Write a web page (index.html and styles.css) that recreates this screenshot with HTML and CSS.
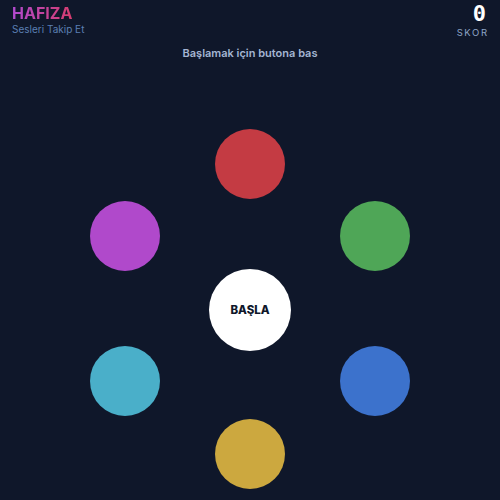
FILE: index.html
```html
<!DOCTYPE html>
<html lang="tr">
<head>
<meta charset="utf-8">
<link rel="stylesheet" href="styles.css">
</head>
<body>
<div class="app">
  <header class="top">
    <div class="brand">
      <div class="title">HAFIZA</div>
      <div class="subtitle">Sesleri Takip Et</div>
    </div>
    <div class="score">
      <div class="score-value">0</div>
      <div class="score-label">SKOR</div>
    </div>
  </header>
  <p class="hint">Başlamak için butona bas</p>
  <div class="board">
    <div class="pad red"></div>
    <div class="pad green"></div>
    <div class="pad blue"></div>
    <div class="pad yellow"></div>
    <div class="pad cyan"></div>
    <div class="pad purple"></div>
    <button class="start">BAŞLA</button>
  </div>
</div>
</body>
</html>
```
FILE: styles.css
```css
* { box-sizing: border-box; }
html, body {
  margin: 0;
  padding: 0;
  background: #0f172a;
  font-family: Inter, "Noto Sans", sans-serif;
}
.app {
  width: 500px;
  height: 500px;
  overflow: hidden;
}
.top {
  display: flex;
  justify-content: space-between;
  align-items: flex-start;
  padding: 3px 13px 0 12px;
}
.title {
  font-size: 16px;
  font-weight: 700;
  line-height: 20px;
  background: linear-gradient(90deg, #b14ad0, #dc3a5c);
  -webkit-background-clip: text;
  background-clip: text;
  color: transparent;
}
.subtitle {
  font-size: 10px;
  line-height: 12px;
  color: #5b7fb3;
}
.score {
  display: flex;
  flex-direction: column;
  align-items: flex-end;
}
.score-value {
  font-family: "DejaVu Sans Mono", monospace;
  font-weight: 700;
  font-size: 22px;
  line-height: 22px;
  color: #ffffff;
  margin-right: 1px;
}
.score-label {
  font-size: 9.5px;
  line-height: 12px;
  letter-spacing: 1.6px;
  margin-right: -1.6px;
  color: #8ea5c6;
  margin-top: 2px;
}
.hint {
  margin: 7px 0 0;
  text-align: center;
  font-size: 11px;
  font-weight: 600;
  line-height: 14px;
  color: #a4b5d2;
}
.board {
  position: relative;
  width: 500px;
  height: 440px;
}
.pad {
  position: absolute;
  width: 70px;
  height: 70px;
  border-radius: 50%;
}
/* board center: (250, 249) in board coords => page y 309 */
.red    { left: 215px; top: 69px;  background: #c43b43; }
.green  { left: 340px; top: 141px; background: #4fa657; }
.blue   { left: 340px; top: 286px; background: #3c72cc; }
.yellow { left: 215px; top: 359px; background: #cca83f; }
.cyan   { left: 90px;  top: 286px; background: #4aafc9; }
.purple { left: 90px;  top: 141px; background: #b049cb; }
.start {
  position: absolute;
  left: 209px;
  top: 209px;
  width: 82px;
  height: 82px;
  border-radius: 50%;
  border: none;
  background: #ffffff;
  color: #0f172a;
  font-family: Inter, "Noto Sans", sans-serif;
  font-weight: 800;
  font-size: 11.5px;
  padding: 0;
}
```
